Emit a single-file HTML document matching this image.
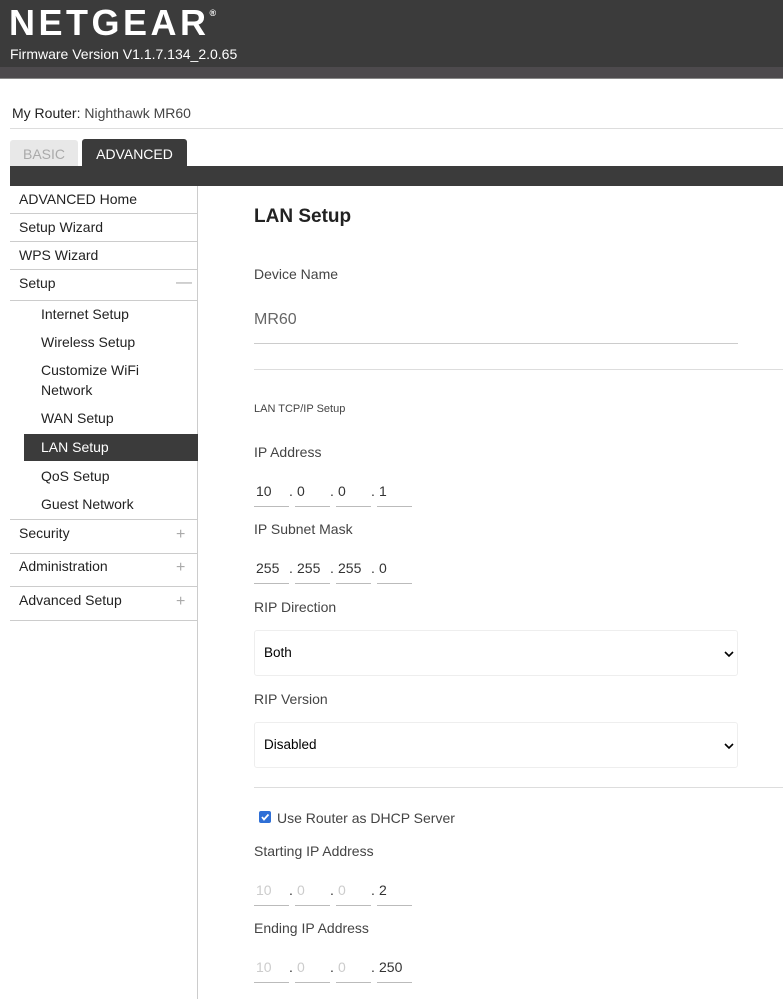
<!DOCTYPE html>
<html><head><meta charset="utf-8"><style>
*{margin:0;padding:0;box-sizing:border-box}
body{width:783px;height:999px;overflow:hidden;background:#fff;font-family:"Liberation Sans",sans-serif;color:#333;position:relative}
.a{position:absolute;white-space:nowrap}
.hd{position:absolute;left:0;top:0;width:783px;height:67px;background:#3b3b3b}
.band{position:absolute;left:0;top:67px;width:783px;height:12px;background:#4d4a4d;border-bottom:1px solid #888}
.logo{left:9px;top:2px;font-size:36px;font-weight:bold;color:#fff;letter-spacing:3.5px}
.fw{left:10px;top:46px;font-size:14px;color:#fff}
.ln{position:absolute;height:1px;background:#ddd}
.mi{font-size:14px;color:#222;transform:translateY(-50%)}
.sep{position:absolute;left:10px;width:188px;height:1px;background:#ccc}
.pm{position:absolute;left:176px;font-size:16px;color:#aaa;transform:translateY(-50%)}
.lbl{font-size:14px;color:#444;left:254px;transform:translateY(-50%)}
.f{position:absolute;height:1px;background:#bbb}
.v{font-size:14px;color:#333;transform:translateY(-50%)}
.g{color:#ccc}
.sel{position:absolute;left:254px;width:484px;height:46px;border:1px solid #eee;border-radius:3px}
.sel span{position:absolute;left:9px;top:14px;font-size:13.5px;color:#000}
.sel svg{position:absolute;right:3px;top:19px}
</style></head><body>
<div class="hd"></div><div class="band"></div>
<div class="a logo">NETGEAR<sup style="font-size:9px;vertical-align:top;position:relative;top:6px;letter-spacing:0">®</sup></div>
<div class="a fw">Firmware Version V1.1.7.134_2.0.65</div>
<div class="a" style="left:12px;top:105px;font-size:14px;color:#222">My Router: <span style="color:#444">Nighthawk MR60</span></div>
<div class="ln" style="left:10px;top:128px;width:773px"></div>
<div class="a" style="left:10px;top:140px;width:68px;height:26px;background:#e8e8e8;border-radius:3px 3px 0 0;color:#aaa;font-size:14px;text-align:center;line-height:28px">BASIC</div>
<div class="a" style="left:82px;top:139px;width:105px;height:28px;background:#3b3b3b;border-radius:3px 3px 0 0;color:#fff;font-size:14px;text-align:center;line-height:30px">ADVANCED</div>
<div class="a" style="left:10px;top:166px;width:773px;height:20px;background:#3b3b3b"></div>
<div class="a" style="left:197px;top:186px;width:1px;height:813px;background:#ccc"></div>
<div class="a mi" style="left:19px;top:199px">ADVANCED Home</div><div class="sep" style="top:213px"></div>
<div class="a mi" style="left:19px;top:227px">Setup Wizard</div><div class="sep" style="top:241px"></div>
<div class="a mi" style="left:19px;top:255px">WPS Wizard</div><div class="sep" style="top:269px"></div>
<div class="a mi" style="left:19px;top:283px">Setup</div><div class="pm" style="top:283px">—</div><div class="sep" style="top:300px"></div>
<div class="a mi" style="left:41px;top:314px">Internet Setup</div>
<div class="a mi" style="left:41px;top:342px">Wireless Setup</div>
<div class="a mi" style="left:41px;top:370px">Customize WiFi</div>
<div class="a mi" style="left:41px;top:390px">Network</div>
<div class="a mi" style="left:41px;top:418px">WAN Setup</div>
<div class="a" style="left:24px;top:434px;width:174px;height:27px;background:#3b3b3b"></div>
<div class="a mi" style="left:41px;top:447px;color:#fff">LAN Setup</div>
<div class="a mi" style="left:41px;top:476px">QoS Setup</div>
<div class="a mi" style="left:41px;top:504px">Guest Network</div><div class="sep" style="top:519px"></div>
<div class="a mi" style="left:19px;top:533px">Security</div><div class="pm" style="top:535px">+</div><div class="sep" style="top:553px"></div>
<div class="a mi" style="left:19px;top:566px">Administration</div><div class="pm" style="top:568px">+</div><div class="sep" style="top:586px"></div>
<div class="a mi" style="left:19px;top:600px">Advanced Setup</div><div class="pm" style="top:602px">+</div><div class="sep" style="top:620px"></div>

<div class="a" style="left:254px;top:206px;font-size:19px;font-weight:bold;color:#222">LAN Setup</div>
<div class="a lbl" style="top:274px">Device Name</div>
<div class="a lbl" style="top:320px;font-size:16px;color:#666">MR60</div>
<div class="ln" style="left:254px;top:343px;width:484px;background:#ccc"></div>
<div class="ln" style="left:254px;top:369px;width:529px"></div>
<div class="a lbl" style="top:409px;font-size:11px">LAN TCP/IP Setup</div>
<div class="a lbl" style="top:452px">IP Address</div>
<div class="a lbl" style="top:529px">IP Subnet Mask</div>
<div class="a lbl" style="top:607px">RIP Direction</div>
<div class="sel" style="top:630px"><span>Both</span><svg width="10" height="8"><path d="M1 2 L5 6 L9 2" stroke="#000" stroke-width="1.6" fill="none"/></svg></div>
<div class="a lbl" style="top:699px">RIP Version</div>
<div class="sel" style="top:722px"><span>Disabled</span><svg width="10" height="8"><path d="M1 2 L5 6 L9 2" stroke="#000" stroke-width="1.6" fill="none"/></svg></div>
<div class="ln" style="left:254px;top:787px;width:529px"></div>
<div class="a" style="left:259px;top:811px;width:12px;height:12px;background:#2f6fd6;border-radius:2px"><svg width="12" height="12" style="position:absolute;left:0;top:0"><path d="M3 6 L5 8.5 L9.5 3.5" stroke="#fff" stroke-width="1.8" fill="none"/></svg></div>
<div class="a lbl" style="left:277px;top:818px">Use Router as DHCP Server</div>
<div class="a lbl" style="top:851px">Starting IP Address</div>
<div class="a lbl" style="top:928px">Ending IP Address</div>

<div id="ips"></div>
<script>
var rows=[[491,506,["10","0","0","1"],0],[568,583,["255","255","255","0"],0],[890,905,["10","0","0","2"],1],[967,982,["10","0","0","250"],1]];
var xs=[254,295,336,377],h="";
rows.forEach(function(r){xs.forEach(function(x,i){
h+='<div class="f" style="left:'+x+'px;top:'+r[1]+'px;width:35px"></div>';
h+='<div class="a v'+(r[3]&&i<3?' g':'')+'" style="left:'+(x+2)+'px;top:'+r[0]+'px">'+r[2][i]+'</div>';
if(i>0)h+='<div class="a v" style="left:'+(x-6)+'px;top:'+r[0]+'px">.</div>';});});
document.getElementById('ips').innerHTML=h;
</script>
</body></html>
